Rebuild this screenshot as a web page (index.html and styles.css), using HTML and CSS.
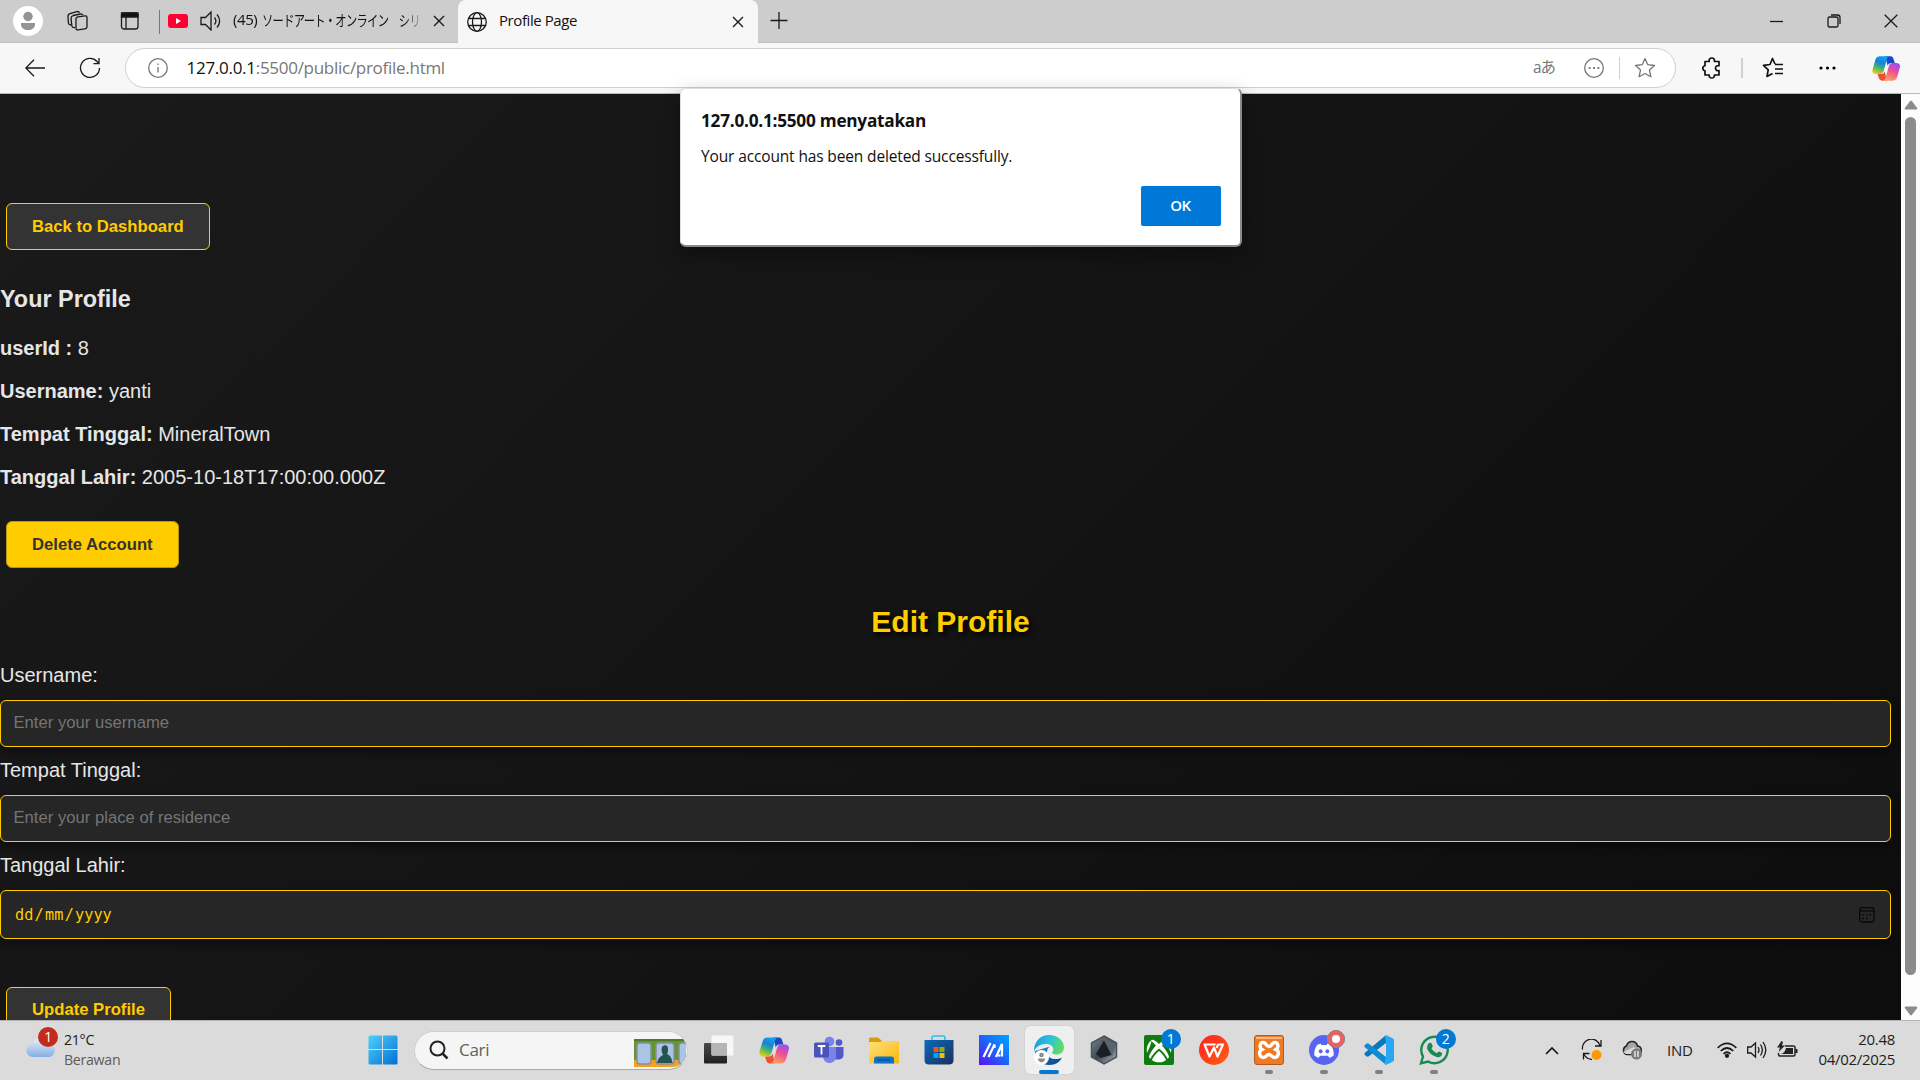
FILE: index.html
```html
<!DOCTYPE html>
<html lang="id">
<head>
<meta charset="utf-8">
<title>Profile Page</title>
<link rel="stylesheet" href="styles.css">
</head>
<body>
<svg class="defs" width="0" height="0" aria-hidden="true">
  <defs>
    <linearGradient id="cpBlue" x1="0.6" y1="0" x2="0.2" y2="1"><stop offset="0" stop-color="#14a0f0"/><stop offset=".35" stop-color="#1683d8"/><stop offset=".65" stop-color="#4cb56a"/><stop offset="1" stop-color="#f5d000"/></linearGradient>
    <linearGradient id="cpPink" x1="0.7" y1="0" x2="0.3" y2="1"><stop offset="0" stop-color="#9a4cf5"/><stop offset=".45" stop-color="#ee4f93"/><stop offset="1" stop-color="#ffa45c"/></linearGradient>
    <linearGradient id="win" x1="0" y1="0" x2="1" y2="1"><stop offset="0" stop-color="#4fd0ff"/><stop offset="1" stop-color="#0070d1"/></linearGradient>
    <linearGradient id="folder" x1="0" y1="0" x2="1" y2="1"><stop offset="0" stop-color="#ffe07a"/><stop offset="1" stop-color="#fbb70a"/></linearGradient>
    <linearGradient id="store" x1="0" y1="0" x2="1" y2="1"><stop offset="0" stop-color="#0a6bbd"/><stop offset="1" stop-color="#1c2f5c"/></linearGradient>
    <linearGradient id="asus" x1="0" y1="1" x2="1" y2="0"><stop offset="0" stop-color="#5a10f5"/><stop offset=".6" stop-color="#1472fb"/><stop offset="1" stop-color="#00a5ff"/></linearGradient>
    <linearGradient id="edgeTop" x1="0" y1="0.3" x2="1" y2="0.6"><stop offset="0" stop-color="#199be8"/><stop offset=".5" stop-color="#2fc4d4"/><stop offset="1" stop-color="#62e05a"/></linearGradient>
    <linearGradient id="edgeLow" x1="0" y1="0" x2="1" y2="1"><stop offset="0" stop-color="#1a8ee0"/><stop offset="1" stop-color="#0b3f83"/></linearGradient>
    <linearGradient id="cube" x1="0" y1="0" x2="1" y2="1"><stop offset="0" stop-color="#7d8b96"/><stop offset=".5" stop-color="#3d464f"/><stop offset="1" stop-color="#b5bcc2"/></linearGradient>
    <linearGradient id="wps" x1="0" y1="0" x2="1" y2="1"><stop offset="0" stop-color="#ff1f1f"/><stop offset="1" stop-color="#ff6212"/></linearGradient>
    <linearGradient id="dark" x1="0" y1="0" x2="0" y2="1"><stop offset="0" stop-color="#4a4a4a"/><stop offset="1" stop-color="#1f1f1f"/></linearGradient>
    <linearGradient id="cloud" x1="0" y1="0" x2="0" y2="1"><stop offset="0" stop-color="#e6f0fb"/><stop offset="1" stop-color="#86aee4"/></linearGradient>
    <symbol id="copilot" viewBox="0 0 30 28">
      <path d="M14 1h6c2 0 2.700 1.500 3.300 3.500L24.500 8h-4c-2 0-3 .8-3.700 3Z" fill="#1748c8"/>
      <path d="M16 27h-5c-2.500 0-3.300-1.700-4-3.800L6 20h4c2 0 3-1 3.600-3Z" fill="#ee5137"/>
      <path d="M8.500 1H19c-2 .2-2.600 1.700-3.200 3.700l-3.300 11.600C11.600 19 10.600 20 8 20H4.500C1.500 20-.2 18 .6 15L3.500 5C4.200 2.500 5.700 1 8.500 1Z" fill="url(#cpBlue)"/>
      <path d="M21.500 27H11.500c2-.2 2.600-1.700 3.200-3.700L18 11.700C18.900 9 19.900 8 22.400 8H26c3 0 4.600 2 3.800 5L27 23c-.8 2.500-2.700 4-5.500 4Z" fill="url(#cpPink)"/>
    </symbol>
    <symbol id="cross" viewBox="0 0 12 12"><path d="m1 1 10 10M11 1 1 11"/></symbol>
  </defs>
</svg>

<header class="tabstrip">
  <div class="cell avatar-cell"><svg width="30" height="30" viewBox="0 0 30 30"><circle cx="15" cy="15" r="15" fill="#fff"/><circle cx="15" cy="10.500" r="4.700" fill="#949494"/><path d="M8 17h14v1.500c0 3.500-3 5.500-7 5.500s-7-2-7-5.500Z" fill="#949494"/></svg></div>
  <div class="cell spaces-cell"><svg class="line" width="22" height="22" viewBox="0 0 22 22"><rect x="9" y="6.500" width="11" height="13" rx="2" transform="skewY(-8) translate(0 2)"/><path d="M8 17.500c-2 .3-3-.4-3.200-2L4 8.700C4 7 4.600 6 6.200 5.500L13.500 4c1.400-.2 2 .2 2.500 1.200"/><path d="M4 15c-1.700 0-2.400-.8-2.600-2L1 6.500C.9 4.800 1.700 4 3 3.600l6.800-2c1.500-.3 2.300.2 2.700 1.200"/></svg></div>
  <div class="cell actions-cell"><svg class="line" width="20" height="20" viewBox="0 0 20 20"><rect x="1.500" y="2" width="16.500" height="16" rx="2.500"/><path d="M1.500 2h16.500v4h-16.500Z" fill="#111"/><path d="M6 6v12"/></svg></div>
  <div class="tab idle">
    <svg width="20" height="14" viewBox="0 0 20 14"><rect width="20" height="14" rx="3" fill="#f03"/><path d="m8 4 5 3-5 3Z" fill="#fff"/></svg>
    <svg class="line" width="21" height="20" viewBox="0 0 21 20"><path d="M1 6.500h4.500L11 1v18l-5.500-5.500H1Z"/><path d="M14.500 6.500c1.600 2 1.600 5 0 7M17 3.500c3.500 3.700 3.500 9.300 0 13"/></svg>
    <span class="tab-title"><span class="prefix">(45)</span><span class="kana">ソードアート・オンライン　シリ</span></span>
    <svg class="line x" width="12" height="12"><use href="#cross"/></svg>
  </div>
  <div class="tab current">
    <svg class="line" width="20" height="20" viewBox="0 0 20 20"><circle cx="10" cy="10" r="9.300"/><ellipse cx="10" cy="10" rx="4.500" ry="9.300"/><path d="M1.500 6.500h17M1.500 13.500h17"/></svg>
    <span class="tab-title">Profile Page</span>
    <svg class="line x" width="12" height="12"><use href="#cross"/></svg>
  </div>
  <div class="cell plus-cell"><svg class="line" width="18" height="18" viewBox="0 0 18 18"><path d="M.5 8.500h17M9 0v17"/></svg></div>
  <div class="window-buttons">
    <div class="cell"><svg class="line" width="13" height="13" viewBox="0 0 13 13"><path d="M0 6.500h13"/></svg></div>
    <div class="cell"><svg class="line" width="14" height="14" viewBox="0 0 14 14"><rect x="1" y="3" width="10" height="10" rx="1.500"/><path d="M4 1h6.500C12.500 1 13 2 13 3.500V10"/></svg></div>
    <div class="cell"><svg class="line" width="14" height="14" viewBox="0 0 14 14"><path d="m.7.700 12.600 12.600M13.300.7.700 13.300"/></svg></div>
  </div>
</header>

<nav class="toolbar">
  <div class="cell back-cell"><svg class="line" width="20" height="18" viewBox="0 0 20 18"><path d="M9 .7.800 9 9 17.300M1 9h19"/></svg></div>
  <div class="cell reload-cell"><svg class="line" width="22" height="22" viewBox="0 0 22 22"><path d="M20.500 11a9.500 9.500 0 1 1-2.500-6.500L20 6.500M20 1v5.700h-5.500"/></svg></div>
  <div class="omnibox">
    <svg class="line grey" width="20" height="20" viewBox="0 0 20 20"><circle cx="10" cy="10" r="9.300"/><path d="M10 9v5.500M10 5.500v1.600"/></svg>
    <span class="url"><b>127.0.0.1</b>:5500/public/profile.html</span>
    <span class="translate">aあ</span>
    <svg class="line grey dots" width="20" height="20" viewBox="0 0 20 20"><circle cx="10" cy="10" r="9.300"/><path d="M4.700 10h1.800M9.100 10h1.800M13.500 10h1.800" stroke-width="2"/></svg>
    <i class="rule"></i>
    <svg class="line grey" width="22" height="22" viewBox="0 0 22 22"><path d="m11 1.500 2.800 6.200 6.700.8-5 4.600 1.400 6.700L11 16.500l-5.900 3.300 1.400-6.700-5-4.600 6.700-.8Z" stroke-linejoin="round"/></svg>
  </div>
  <div class="cell ext-cell"><svg class="line bold" width="21" height="22" viewBox="0 0 21 22"><path d="M3 4.500h4.200c-.5-2.200.7-3.500 2.600-3.500s3.100 1.300 2.600 3.500H17v4.200c-2.200-.3-3.500.7-3.500 2.500s1.300 2.800 3.500 2.500V18h-4.600c.3 1.900-.9 3-2.600 3s-2.900-1.100-2.600-3H3v-4.200C1.500 13.500.800 12.500.8 11.200S1.500 9 3 8.700Z" stroke-linejoin="round"/></svg></div>
  <i class="rule thick"></i>
  <div class="cell fav-cell"><svg class="line bold" width="22" height="22" viewBox="0 0 22 22"><path d="M13 7 10.500 1.500 8 7.500l-6.500.8 4.700 4.500L5 19.500l5.500-3M13 7.500h8M13 12h8M13 16.500h8" stroke-linejoin="round"/></svg></div>
  <div class="cell more-cell"><svg width="17" height="4" viewBox="0 0 17 4"><circle cx="2" cy="2" r="1.600"/><circle cx="8.500" cy="2" r="1.600"/><circle cx="15" cy="2" r="1.600"/></svg></div>
  <div class="cell copilot-cell"><svg width="28" height="27"><use href="#copilot"/></svg></div>
</nav>

<div class="viewport">
  <main class="page">
    <a class="btn">Back to Dashboard</a>
    <h3>Your Profile</h3>
    <p><b>userId :</b> 8</p>
    <p><b>Username:</b> yanti</p>
    <p><b>Tempat Tinggal:</b> MineralTown</p>
    <p><b>Tanggal Lahir:</b> 2005-10-18T17:00:00.000Z</p>
    <a class="btn danger">Delete Account</a>
    <h2>Edit Profile</h2>
    <form class="form">
      <label>Username:</label>
      <div class="field">Enter your username</div>
      <label>Tempat Tinggal:</label>
      <div class="field">Enter your place of residence</div>
      <label>Tanggal Lahir:</label>
      <div class="field date">
        <span class="parts"><span>dd</span><span>/</span><span>mm</span><span>/</span><span>yyyy</span></span>
        <svg width="16" height="16" viewBox="0 0 16 16" fill="none" stroke="#080808"><rect x=".7" y=".7" width="14.300" height="14.300" rx="2.500" stroke-width="1.300"/><path d="M1 4h14" stroke-width="1.200"/><path d="M3.500 8h1.500M7 8h1.500M10.500 8H12M3.500 11.300h1.500M7 11.300h1.500" stroke-width="1.700"/></svg>
      </div>
      <a class="btn submit">Update Profile</a>
    </form>
  </main>
  <div class="scrollbar">
    <svg width="14" height="10" viewBox="0 0 14 10"><path d="M6 1.200Q7 0 8 1.200l5 6.500Q14 9.500 12 9.500H2Q0 9.500 1 7.700Z"/></svg>
    <i class="thumb"></i>
    <svg width="14" height="10" viewBox="0 0 14 10"><path d="M6 8.800Q7 10 8 8.800l5-6.500Q14 .5 12 .5H2Q0 .5 1 2.300Z"/></svg>
  </div>
</div>

<div class="dialog">
  <strong>127.0.0.1:5500 menyatakan</strong>
  <span class="message">Your account has been deleted successfully.</span>
  <span class="ok">OK</span>
</div>

<footer class="taskbar">
  <div class="weather">
    <div class="weather-icon">
      <svg width="32" height="24" viewBox="0 0 32 24"><path d="M8 22a6.500 6.500 0 0 1-.5-13A9 9 0 0 1 24 8.500 7 7 0 0 1 25 22Z" fill="url(#cloud)"/></svg>
      <span class="badge red">1</span>
    </div>
    <div class="weather-text"><span>21°C</span><span class="muted">Berawan</span></div>
  </div>
  <div class="start"><svg width="30" height="30" viewBox="0 0 30 30"><path d="M2 .5h12V14H.5V2Q.5.500 2 .5ZM15 .5h13q1.500 0 1.500 1.500v12H15ZM.5 15H14v14.500H2Q.5 29.500.5 28ZM15 15h14.500v13q0 1.500-1.500 1.500H15Z" fill="url(#win)"/></svg></div>
  <div class="search">
    <svg width="20" height="20" viewBox="0 0 20 20" fill="none" stroke="#222" stroke-width="2"><circle cx="8.500" cy="8.500" r="7"/><path d="m13.500 13.500 5 5" stroke-width="2.500"/></svg>
    <span>Cari</span>
    <svg class="train" width="52" height="28" viewBox="0 0 52 28"><rect width="54" height="28" fill="#f5a11c"/><path d="M0 1h54v20H0Z" fill="#63962f"/><path d="M0 0h54v2H0Z" fill="#4d7a22"/><g fill="#a9c4e4" stroke="#8a8f9a" stroke-width="1.500"><rect x="3" y="4" width="14" height="21" rx="3"/><rect x="22" y="4" width="18" height="21" rx="3"/><rect x="45" y="4" width="16" height="21" rx="3"/></g><path d="M23 24c1-5 4-7 6-8-1-2-2-5-1-8 2-3 6-2 6 1 0 2 0 5-1 6 3 1 5 4 5.500 9Z" fill="#24554f"/></svg>
  </div>
  <div class="apps">
    <div class="app"><svg width="30" height="30" viewBox="0 0 30 30"><rect x="0" y="8" width="23" height="20.500" rx="1" fill="url(#dark)"/><rect x="7.500" y=".5" width="22" height="20" rx="1" fill="#f7f7f7"/><path d="M7.500 8H23v12.500H8.500q-1 0-1-1Z" fill="#b4b5b5"/></svg></div>
    <div class="app"><svg width="30" height="29"><use href="#copilot"/></svg></div>
    <div class="app"><svg width="30" height="28" viewBox="0 0 30 28"><circle cx="15.500" cy="5.500" r="4.800" fill="#7b83eb"/><circle cx="25" cy="6.500" r="3.300" fill="#5059c9"/><path d="M21 11h8.500v8c0 3-2.500 4.500-5 4.500h-3.500Z" fill="#5059c9"/><path d="M9 11h13v9c0 4.500-3 7-6.500 7S9 24.500 9 20Z" fill="#7b83eb"/><rect y="6.500" width="15" height="15" rx="1.500" fill="#4b53bc"/><path d="M3.800 10h7.500M7.500 10v8.500" stroke="#fff" stroke-width="1.800"/></svg></div>
    <div class="app"><svg width="30" height="27" viewBox="0 0 30 27"><path d="M0 8V2Q0 .5 1.500.5H9l4 3.500v4Z" fill="#dc9a0b"/><path d="M0 5h11l2-1h15.500Q30 4 30 5.500V26.500H0Z" fill="url(#folder)"/><path d="M5 26.500V22q0-2.500 2.500-2.500h15q2.500 0 2.500 2.500v4.500Z" fill="#0c73c9"/><path d="M8.500 23h13" stroke="#084a8c" stroke-width="1.200"/></svg></div>
    <div class="app"><svg width="30" height="30" viewBox="0 0 30 30"><path d="M8 5V3q0-2 2-2h9q2 0 2 2v2" fill="none" stroke="#35bdf0" stroke-width="1.600"/><path d="M.5 5h29v20q0 4.500-4.500 4.500H5Q.5 29.500.5 25Z" fill="url(#store)"/><path d="M9.500 12h5v5h-5Z" fill="#f25022"/><path d="M15.500 12h5v5h-5Z" fill="#7fba00"/><path d="M9.500 18h5v5h-5Z" fill="#00a4ef"/><path d="M15.500 18h5v5h-5Z" fill="#ffb900"/></svg></div>
    <div class="app"><svg width="30" height="30" viewBox="0 0 30 30"><path d="M0 0h30v30H0Z" fill="url(#asus)"/><path d="M4.500 22 11.500 8M9.500 22 15.500 9.500 15.500 13M17 22l6-13v12.500" fill="none" stroke="#fff" stroke-width="2.300"/><circle cx="20.300" cy="20.500" r="1.300" fill="#fff"/></svg></div>
    <div class="app active"><svg width="30" height="30" viewBox="0 0 30 30"><path d="M1 16C0 24 7 30 15.500 30c6 0 10.500-3 12.500-7.500-5 3-15 2-15-5.500 0-3 1.500-4.500 3-5.500Z" fill="url(#edgeLow)"/><path d="M0 14.500C.5 6 7 0 15 0c9 0 15 6 15 12.500 0 4.500-3.500 7-7.500 7-3 0-5-1-4-2.500 2.500-4-1-8-6-8C6 9 1 12.500 0 17Z" fill="url(#edgeTop)"/><circle cx="7.500" cy="22.500" r="7.500" fill="#fff"/><circle cx="7.500" cy="20" r="2.300" fill="#8b8b8b"/><path d="M4 23.500h7c0 2.500-1.500 3.700-3.500 3.700S4 26 4 23.500Z" fill="#8b8b8b"/></svg></div>
    <div class="app"><svg width="28" height="30" viewBox="0 0 28 30"><path d="m14 1 12.500 7v14L14 29 1.500 22V8Z" fill="url(#cube)" stroke="#4a545c" stroke-width="1.500"/><path d="m14 2.500 11.500 6.200-3.500 13L14 5Z" fill="#59646e"/><path d="m14 5.500 7.500 14.500-11 3-4.500-4Z" fill="#1b1f23"/></svg></div>
    <div class="app"><svg width="30" height="30" viewBox="0 0 30 30"><rect width="30" height="30" rx="2" fill="#107c10"/><circle cx="15" cy="15" r="12.300" fill="#fff"/><path d="M7 4c4 1 6 3 8 5 2-2 4-4 8-5l-2.500-2h-11ZM12 10.500C7 16 5 20 4.500 24.500L2 20Q7 10 7.500 6ZM18 10.500c5 5.500 7 9.500 7.500 14L28 20Q23 10 22.500 6ZM15 13.500c-4 3-7.500 7.500-9 11l1.500 1.500C9 22 12 18.500 15 16c3 2.500 6 6 7.500 10l1.500-1.500c-1.500-3.500-5-8-9-11Z" fill="#107c10"/></svg><span class="badge">1</span></div>
    <div class="app"><svg width="30" height="30" viewBox="0 0 30 30"><circle cx="15" cy="15" r="15" fill="url(#wps)"/><path d="M16.500 9.500H5.500L10.500 21.500 15 12.500 18.500 21.500 24 9.500h-5l-1.300 3.500" fill="none" stroke="#fff" stroke-width="2.200" stroke-linejoin="round"/></svg></div>
    <div class="app run"><svg width="30" height="30" viewBox="0 0 30 30"><rect x=".5" y=".5" width="29" height="29" rx="2.500" fill="#ee7a24" stroke="#b65a1b"/><path d="M2 2h26v2H2Z" fill="#f8b483"/><path d="M9.500 7.500c-4 0-4.500 5-1.500 7-4 2-2.500 8 1.500 8 3 0 3-3 5.500-3s2.500 3 5.500 3c4 0 5.500-6 1.500-8 3-2 2.500-7-1.500-7-3 0-2 4-5.500 4s-2.500-4-5.500-4Z" fill="none" stroke="#fff" stroke-width="3.400"/></svg></div>
    <div class="app run"><svg width="30" height="30" viewBox="0 0 30 30"><circle cx="15" cy="15" r="15" fill="#5865f2"/><path d="M11.500 8.500 8 10c-2 3-3 7-2.700 10.500 1.500 1.200 3 1.900 4.500 2.200l1.200-2h8l1.200 2c1.500-.3 3-1 4.500-2.200C25 17 24 13 22 10l-3.500-1.500-.8 1.500h-5.400Z" fill="#fff"/><ellipse cx="11.700" cy="16.300" rx="1.900" ry="2.100" fill="#5865f2"/><ellipse cx="18.300" cy="16.300" rx="1.900" ry="2.100" fill="#5865f2"/></svg><span class="badge live"></span></div>
    <div class="app run"><svg width="30" height="30" viewBox="0 0 30 30"><path d="M22 8 4.500 21.500Q3 22 2 21L.7 19.700q-.8-1 .2-2L21.500.5Z" fill="#0b76bd"/><path d="M22 22 4.500 8.500Q3 8 2 9L.7 10.300q-.8 1 .2 2L21.500 29.500Z" fill="#0f8bd6"/><path d="m22 0 7 3.500q1 .5 1 1.500v20q0 1-1 1.500L22 30q-1 0-1.500-.7 1.500.5 1.500-1.300V2q0-1.800-1.500-1.300Q21 0 22 0Z" fill="#2aa7f3"/><path d="M22 2h5v26h-5Z" fill="#2aa7f3"/></svg></div>
    <div class="app run"><svg width="30" height="30" viewBox="0 0 30 30"><path d="M2 28.300 4 21.500A13.200 13.200 0 1 1 9 26.500Z" fill="none" stroke="#1a8a55" stroke-width="2.400"/><path d="M10 8q2-1 2.700.7l1 2.300q.2.800-1.200 2.500 2 3.500 5.300 4.700 1.500-1.900 2.300-1.700l2.600 1.300q.8.700 0 2.400-1.700 2.800-5 1.800Q10 19.500 8 13.200 7.600 10 10 8Z" fill="#1a8a55"/></svg><span class="badge">2</span></div>
  </div>
  <div class="tray">
    <div class="cell"><svg class="line tk" width="14" height="9" viewBox="0 0 14 9"><path d="m1 8 6-6 6 6"/></svg></div>
    <div class="cell"><svg class="line" width="22" height="22" viewBox="0 0 22 22"><path d="M1.500 10.500A9 9 0 0 1 19 6.500M20 1v6h-6M2.500 20.500v-6h6M3 15.500q2.500 4.500 8 5"/><circle cx="15.500" cy="16" r="5" fill="#ff9800" stroke="none"/></svg></div>
    <div class="cell"><svg width="22" height="20" viewBox="0 0 22 20"><path d="M5.500 14.500a4.500 4.500 0 0 1 0-8.500C7 0 15 0 16.500 6c5 .5 5 8.500 0 8.500Z" fill="#a5a5a5" stroke="#222" stroke-width="1.500"/><path d="M2 12 13 7l5 7H5Z" fill="#d8d8d8"/><circle cx="15.500" cy="14" r="5.500" fill="#7b7b7b"/><path d="M14 11v6M17 11v6" stroke="#fff" stroke-width="1.200"/></svg></div>
    <span class="lang">IND</span>
    <div class="net">
      <svg class="line tk" width="20" height="16" viewBox="0 0 20 16"><path d="M.7 5.800Q10-3 19.300 5.800M3.700 9Q10 3 16.300 9M6.500 12Q10 8.500 13.500 12"/><circle cx="10" cy="13.800" r="1.300" fill="#222"/></svg>
      <svg class="line" width="20" height="18" viewBox="0 0 20 18"><path d="M.7 6H4l4.500-4v14L4 12H.7ZM11 6q2 3 0 6M13.500 3.500q3.700 5.500 0 11M16 1q5.500 8 0 16"/></svg>
      <svg width="21" height="18" viewBox="0 0 21 18"><path d="M8 5h8.500q1.500 0 1.500 1.500v7q0 1.500-1.500 1.500H3q-1.500 0-1.500-1.500V12" fill="none" stroke="#222" stroke-width="1.500"/><path d="M9 7h7v6H4q4-1 5-6ZM18.500 8h2v4h-2ZM4.500 0 0 6.500h3L1.500 11 8 4.500H5L6 1Z" fill="#222"/></svg>
    </div>
    <div class="clock"><span>20.48</span><span>04/02/2025</span></div>
  </div>
</footer>
</body>
</html>
```
FILE: styles.css
```css
* { box-sizing: border-box; }

body {
  margin: 0;
  width: 1920px;
  height: 1080px;
  overflow: hidden;
  display: flex;
  flex-direction: column;
  font-family: "Open Sans", "Noto Sans", sans-serif;
  font-size: 15px;
  color: #111;
}

svg { display: block; flex: none; }
.defs { position: absolute; }
.line { fill: none; stroke: #1a1a1a; stroke-width: 1.3; }
.line.grey { stroke: #767676; }
.line.bold { stroke-width: 1.7; stroke: #111; }
.line.tk { stroke-width: 1.7; }
.cell { display: flex; flex: none; align-items: center; justify-content: center; }

/* Tab strip */
.tabstrip {
  display: flex;
  flex: none;
  height: 43px;
  padding-bottom: 1px;
  background: #cdcdcd;
  box-shadow: inset 0 -1px #bfbfbf;
}
.avatar-cell { width: 56px; }
.spaces-cell { width: 44px; }
.actions-cell { width: 60px; background: linear-gradient(#777, #777) right 10px / 1px 24px no-repeat; }
.tab { display: flex; flex: none; align-items: center; gap: 12px; }
.tab.idle { width: 298px; padding: 0 13px 0 8px; }
.tab.current {
  width: 300px;
  height: 43px;
  padding: 0 14px 0 9px;
  background: #f7f7f7;
  border-radius: 8px 8px 0 0;
}
.tab-title { flex: 1; padding-bottom: 3px; white-space: nowrap; letter-spacing: -0.42px; }
.idle .tab-title {
  display: flex;
  width: 194px;
  flex: none;
  margin-right: auto;
  font-family: "Open Sans", "Noto Sans CJK JP", sans-serif;
  mask-image: linear-gradient(90deg, #000 88%, transparent 99%);
}
.prefix { width: 29px; }
.kana { letter-spacing: -0.9px; transform: scaleX(.75); transform-origin: 0 50%; margin-right: -70px; }
.idle .x { margin-left: -12px; }
.tab .x { stroke-width: 1.4; }
.plus-cell { width: 42px; }
.window-buttons { display: flex; margin-left: auto; }
.window-buttons .cell { width: 57.5px; }

/* Address bar */
.toolbar {
  display: flex;
  flex: none;
  align-items: center;
  height: 51px;
  background: #f7f7f7;
  border-bottom: 1px solid #b9b9b9;
}
.back-cell { width: 70px; }
.reload-cell { width: 40px; margin-right: 15px; }
.omnibox {
  display: flex;
  flex: none;
  align-items: center;
  width: 1551px;
  height: 40px;
  padding: 0 19px 0 22px;
  background: #fff;
  border: 1px solid #d0d0d0;
  border-radius: 20px;
}
.url { margin-left: 18.5px; padding-bottom: 2px; font-size: 17px; letter-spacing: -0.28px; color: #777; }
.url b { font-weight: 400; color: #111; }
.translate {
  margin-left: auto;
  padding-bottom: 2px;
  font-family: "Open Sans", "Noto Sans CJK JP", sans-serif;
  font-size: 15.5px;
  line-height: 20px;
  letter-spacing: -1px;
  color: #767676;
}
.dots { margin: 0 15px 0 29px; }
.rule { width: 1px; height: 22px; background: #d0d0d0; margin-right: 14px; }
.ext-cell { width: 65px; padding-left: 7px; }
.rule.thick { width: 2px; height: 20px; margin: 0; }
.fav-cell { width: 60px; }
.more-cell { width: 48px; }
.copilot-cell { width: 69px; }

/* Web page */
.viewport { display: flex; flex: none; height: 926px; overflow: hidden; }
.page {
  width: 1901px;
  height: 1000px;
  padding-top: 109px;
  background: linear-gradient(135deg, #1a1a1a, #0d0d0d);
  font: 20px/23px "Liberation Sans", Arial, sans-serif;
  color: #e6e6e6;
}
.btn {
  display: block;
  width: fit-content;
  height: 47px;
  margin-left: 6px;
  padding: 0 25px;
  border: 1px solid #fc0;
  border-radius: 6px;
  background: #333;
  color: #fc0;
  font-size: 16.67px;
  font-weight: 700;
  line-height: 46px;
}
.btn.submit { line-height: 44px; }
.btn.danger { margin-top: 32px; background: #fc0; color: #333; border-color: #b8961a; }
.page h3 { margin: 36px 0 24px; font-size: 23.4px; line-height: 27px; }
.page p { margin: 0 0 20px; }
.page p:last-of-type { margin: 0; }
.page h2 {
  margin: 36px 0 25px;
  font-size: 30px;
  line-height: 35px;
  text-align: center;
  color: #fc0;
  text-shadow: 3px 3px 5px #000;
}
.form label { display: block; margin-bottom: 13px; }
.field {
  width: 1891px;
  height: 47px;
  margin-bottom: 12px;
  padding: 0 12.5px;
  border: 1px solid #fc0;
  border-radius: 6px;
  background: #262626;
  box-shadow: 0 4px 8px rgba(0, 0, 0, .5);
  color: #757575;
  font-size: 16.67px;
  line-height: 44px;
}
.field.date {
  display: flex;
  align-items: center;
  justify-content: space-between;
  height: 49px;
  padding: 0 15px 0 14px;
  margin-bottom: 48px;
  color: #fc0;
}
.parts { display: flex; gap: 1.3px; padding-top: 1px; font-family: "DejaVu Sans Mono", monospace; font-size: 15.2px; line-height: 47px; }

/* Scrollbar */
.scrollbar {
  display: flex;
  flex-direction: column;
  align-items: center;
  width: 19px;
  height: 926px;
  padding: 6px 0 4px;
  background: #fcfcfc;
  fill: #8b8b8b;
}
.thumb { width: 11px; height: 858px; margin: 7px 0 auto; border-radius: 6px; background: #8b8b8b; }

/* Alert over the page */
.dialog {
  position: absolute;
  left: 680px;
  top: 88px;
  width: 562px;
  height: 159px;
  padding: 19px 20px 0;
  display: flex;
  flex-direction: column;
  background: #fff;
  border: 1px solid #ddd;
  border-right: 2px solid #8a8a8a;
  border-bottom: 2px solid #8a8a8a;
  border-radius: 6px;
  box-shadow: 0 8px 20px rgba(0, 0, 0, .35);
}
.dialog strong { font-size: 17.2px; line-height: 26px; letter-spacing: -0.24px; }
.message { margin-top: 10px; line-height: 24px; font-size: 15.5px; letter-spacing: -0.14px; }
.ok {
  align-self: flex-end;
  width: 80px;
  height: 40px;
  margin: 18px -1px 0 0;
  padding-right: 1px;
  border-radius: 2px;
  background: #0078d7;
  color: #fff;
  font-weight: 600;
  line-height: 39px;
  text-align: center;
  letter-spacing: -0.4px;
}

/* Taskbar */
.taskbar {
  display: flex;
  flex: none;
  height: 60px;
  align-items: center;
  padding-bottom: 1px;
  background: #dbdbdb;
  border-top: 1px solid #b5b0b5;
  letter-spacing: -0.3px;
  color: #222;
}
.weather { display: flex; align-items: center; width: 368px; padding-left: 25px; gap: 7px; }
.weather-icon { position: relative; top: -3px; }
.weather-text { display: flex; flex-direction: column; padding-bottom: 1px; font-size: 14.2px; line-height: 20px; }
.muted { color: #5c5c5c; }
.badge {
  position: absolute;
  right: 6px;
  top: 2px;
  width: 20px;
  height: 20px;
  border-radius: 50%;
  background: #0078d4;
  color: #fff;
  font-size: 14px;
  line-height: 19px;
  text-align: center;
}
.badge.red { right: -1px; top: -8px; background: #c42b1c; }
.start { width: 46px; }
.search {
  display: flex;
  align-items: center;
  width: 274px;
  height: 39px;
  padding-left: 14px;
  border-radius: 20px;
  background: #f5f5f5;
  border: 1px solid #cfcfcf;
  border-bottom-color: #aaa;
  overflow: hidden;
  font-size: 17px;
  color: #606060;
}
.search span { margin-left: 10px; padding-bottom: 1px; }
.train { margin: 6px 1px 0 auto; border-bottom-right-radius: 14px; }
.apps { display: flex; margin-left: 3.500px; }
.app {
  position: relative;
  display: flex;
  align-items: center;
  justify-content: center;
  width: 55px;
  height: 48px;
}
.app.active { width: 49px; margin: 0 3px; background: #efefef; border-radius: 5px; box-shadow: 0 0 1px #999; }
.app .badge { right: 6px; top: 3px; width: 20px; }
.app .badge.live {
  width: 18px;
  height: 18px;
  right: 7px;
  top: 4px;
  background: #fff;
  border: 5px solid #ec5f62;
  outline: 1px solid #888;
  outline-offset: -1px;
}
.run::after, .active::after {
  content: "";
  position: absolute;
  bottom: 0;
  width: 8px;
  height: 4px;
  border-radius: 2px;
  background: #808080;
}
.active::after { width: 20px; background: #0078d4; }
.tray { display: flex; align-items: center; margin-left: auto; padding-right: 25px; }
.tray .cell { width: 40px; }
.lang { width: 50px; padding-left: 15px; }
.net { display: flex; align-items: center; gap: 10px; margin-left: 15px; }
.clock { display: flex; flex-direction: column; width: 97px; padding-bottom: 2px; text-align: right; line-height: 20px; }
```
